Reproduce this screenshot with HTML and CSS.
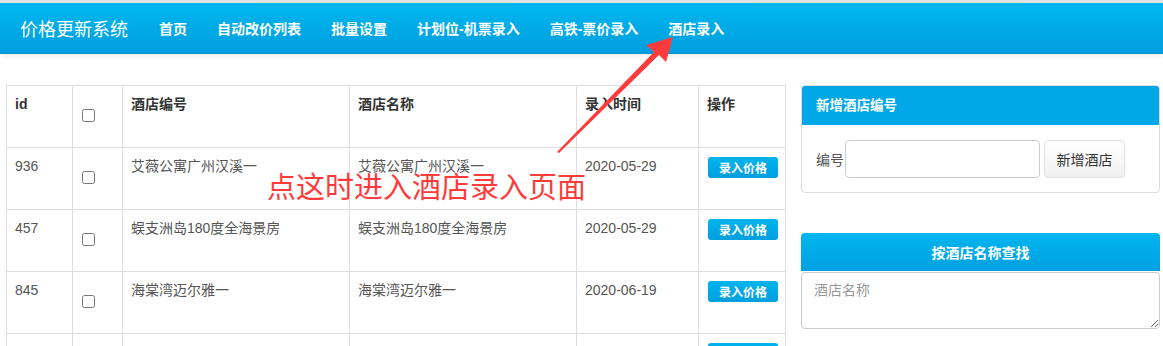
FILE: index.html
```html
<!DOCTYPE html>
<html lang="zh-CN">
<head>
  <meta charset="UTF-8">
  <title>酒店录入</title>
  <link rel="stylesheet" href="styles.css">
</head>
<body>
  <div class="topline"></div>
  <nav class="navbar">
    <a class="brand" href="#">价格更新系统</a>
    <ul class="nav">
      <li><a href="#">首页</a></li>
      <li><a href="#">自动改价列表</a></li>
      <li><a href="#">批量设置</a></li>
      <li><a href="#">计划位-机票录入</a></li>
      <li><a href="#">高铁-票价录入</a></li>
      <li><a href="#">酒店录入</a></li>
    </ul>
  </nav>

  <div class="main">
    <div class="left">
      <table class="grid">
        <thead>
          <tr>
            <th class="c-id">id</th>
            <th class="c-chk"><input type="checkbox"></th>
            <th class="c-no">酒店编号</th>
            <th class="c-name">酒店名称</th>
            <th class="c-date">录入时间</th>
            <th class="c-op">操作</th>
          </tr>
        </thead>
        <tbody>
          <tr>
            <td>936</td>
            <td><input type="checkbox"></td>
            <td>艾薇公寓广州汉溪一</td>
            <td>艾薇公寓广州汉溪一</td>
            <td>2020-05-29</td>
            <td><button class="btn-price">录入价格</button></td>
          </tr>
          <tr>
            <td>457</td>
            <td><input type="checkbox"></td>
            <td>蜈支洲岛180度全海景房</td>
            <td>蜈支洲岛180度全海景房</td>
            <td>2020-05-29</td>
            <td><button class="btn-price">录入价格</button></td>
          </tr>
          <tr>
            <td>845</td>
            <td><input type="checkbox"></td>
            <td>海棠湾迈尔雅一</td>
            <td>海棠湾迈尔雅一</td>
            <td>2020-06-19</td>
            <td><button class="btn-price">录入价格</button></td>
          </tr>
          <tr>
            <td>&nbsp;</td>
            <td></td>
            <td></td>
            <td></td>
            <td></td>
            <td><span class="btn-stub"></span></td>
          </tr>
        </tbody>
      </table>
    </div>

    <div class="right">
      <div class="panel">
        <div class="panel-head">新增酒店编号</div>
        <div class="panel-body">
          <label class="lbl">编号</label>
          <input type="text" class="field">
          <button class="btn-plain">新增酒店</button>
        </div>
      </div>

      <div class="search">
        <button class="btn-search">按酒店名称查找</button>
        <textarea class="area" placeholder="酒店名称"></textarea>
      </div>
    </div>
  </div>

  <!-- annotation drawn over the screenshot -->
  <svg class="arrow" width="1163" height="346" viewBox="0 0 1163 346">
    <polygon points="557,152 654,52 646,45 673,37 666,62 659,55 559,153" fill="#ff3b3b"/>
  </svg>
  <div class="note">点这时进入酒店录入页面</div>
</body>
</html>
```

FILE: styles.css
```css
body {
  margin: 0;
  font-family: "Liberation Sans", Arial, "Noto Sans CJK SC", sans-serif;
  font-size: 14px;
  color: #555;
  background: #fff;
  position: relative;
  height: 346px;
  overflow: hidden;
}
.topline {
  height: 3px;
  background: #e2e2e2;
}
.navbar {
  display: flex;
  align-items: center;
  height: 50px;
  padding-left: 20px;
  background: linear-gradient(#00b7ee, #009ee0);
  border-bottom: 1px solid #0090d2;
  box-shadow: 0 2px 6px rgba(0,0,0,0.08);
}
.brand {
  color: #fff;
  font-size: 18px;
  text-decoration: none;
  margin-right: 16px;
}
.nav {
  display: flex;
  list-style: none;
  margin: 0;
  padding: 0;
}
.nav a {
  display: block;
  padding: 0 15px;
  color: #fff;
  text-decoration: none;
  font-size: 14px;
  font-weight: 600;
}
.main {
  display: flex;
  padding: 31px 0 0 6px;
}
.left {
  width: 780px;
}
.grid {
  border-collapse: collapse;
  width: 780px;
  table-layout: fixed;
}
.grid th, .grid td {
  border: 1px solid #ddd;
  padding: 8px;
  height: 45px;
  line-height: 20px;
  text-align: left;
  vertical-align: top;
}
.grid th {
  color: #333;
  font-weight: bold;
}
.c-id { width: 49px; }
.c-chk { width: 33px; }
.c-no { width: 210px; }
.c-name { width: 210px; }
.c-date { width: 105px; }
.c-op { width: 70px; }
.grid input[type=checkbox] {
  display: block;
  margin: 15px 0 0 1px;
  width: 13px;
  height: 13px;
}
.btn-price {
  display: block;
  width: 70px;
  height: 21px;
  margin: 1px 0 0 1px;
  padding: 0;
  border: none;
  border-radius: 3px;
  background: linear-gradient(#00b4ec, #009fdf);
  color: #fff;
  font-size: 12px;
  font-weight: bold;
  font-family: "Noto Sans CJK SC", sans-serif;
}
.btn-stub {
  display: block;
  width: 70px;
  height: 21px;
  margin: 1px 0 0 1px;
  border-radius: 3px;
  background: linear-gradient(#00b4ec, #009fdf);
}
.right {
  width: 359px;
  margin-left: 15px;
}
.panel {
  border: 1px solid #ddd;
  border-radius: 4px;
  overflow: hidden;
}
.panel-head {
  height: 39px;
  line-height: 39px;
  padding-left: 14px;
  background: #00a8e8;
  color: #fff;
  font-size: 13.5px;
  font-weight: bold;
}
.panel-body {
  display: flex;
  align-items: center;
  padding: 15px 14px 14px;
}
.lbl {
  color: #555;
}
.field {
  width: 195px;
  height: 38px;
  box-sizing: border-box;
  border: 1px solid #ccc;
  border-radius: 4px;
  margin: 0 4px 0 1px;
}
.btn-plain {
  width: 81px;
  height: 38px;
  border: 1px solid #e2e2e2;
  border-radius: 4px;
  background: linear-gradient(#fff, #f0f0f0);
  color: #333;
  font-size: 14px;
  font-family: "Noto Sans CJK SC", sans-serif;
}
.search {
  margin-top: 40px;
}
.btn-search {
  display: block;
  width: 100%;
  height: 38px;
  border: none;
  border-radius: 4px 4px 0 0;
  background: linear-gradient(#00b6ee, #00a0e2);
  color: #fff;
  font-size: 14px;
  font-weight: bold;
  font-family: "Noto Sans CJK SC", sans-serif;
}
.area {
  display: block;
  width: 100%;
  height: 57px;
  box-sizing: border-box;
  margin-top: 1px;
  padding: 6px 12px;
  border: 1px solid #ccc;
  border-radius: 4px;
  font-size: 14px;
  font-family: "Liberation Sans", "Noto Sans CJK SC", sans-serif;
}
.area::placeholder {
  color: #999;
}
.arrow {
  position: absolute;
  left: 0;
  top: 0;
  pointer-events: none;
}
.note {
  position: absolute;
  left: 267px;
  top: 166px;
  color: #ff3b3b;
  font-size: 29px;
  line-height: 38px;
  font-family: "Noto Sans CJK SC", sans-serif;
}
```
